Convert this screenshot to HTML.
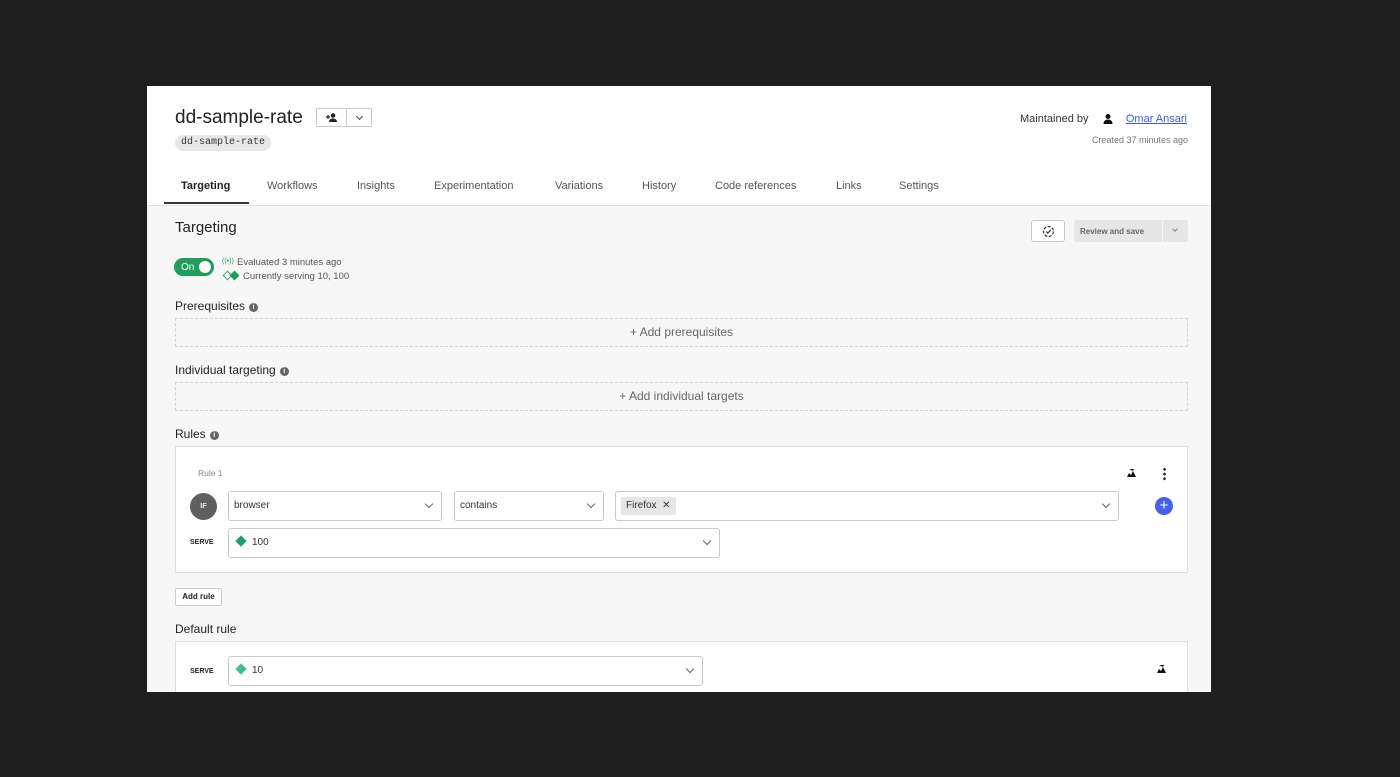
<!DOCTYPE html>
<html><head><style>
*{box-sizing:border-box;margin:0;padding:0}
body{width:1400px;height:777px;background:#1e1e1e;font-family:"Liberation Sans",sans-serif;position:relative;overflow:hidden;color:#222}
.a{position:absolute}
#panel{left:147px;top:86px;width:1064px;height:606px;background:#f7f7f7;overflow:hidden}
#head{left:0;top:0;width:1064px;height:120px;background:#fff;border-bottom:1px solid #e2e2e2}
.tab{position:absolute;top:94px;font-size:11px;color:#555}
.info{display:inline-block;width:9px;height:9px;border-radius:50%;background:#666;color:#fff;font-size:7px;text-align:center;line-height:9px;font-weight:bold;vertical-align:1px;margin-left:4px}
.sec{font-size:12px;color:#222}
.dash{border:1px dashed #d4d4d4;height:29px;left:28px;width:1013px;font-size:12px;color:#666;text-align:center;line-height:27px}
.box{background:#fff;border:1px solid #e0e0e0}
.sel{position:absolute;background:#fff;border:1px solid #c9c9c9;border-radius:3px;font-size:10px;color:#333;line-height:28px;padding-left:5px;height:30px}
.chev{position:absolute;right:9px;top:9px;width:6px;height:6px;border-right:1.3px solid #666;border-bottom:1.3px solid #666;transform:rotate(45deg)}
.dia{display:inline-block;width:8px;height:8px;background:#1f9e6c;transform:rotate(45deg);margin:0 7px 0 3px}
.serve{font-size:7px;font-weight:bold;color:#222}
</style></head><body>
<div id="panel" class="a">
 <div id="head" class="a">
  <div class="a" style="left:28px;top:21px;font-size:19px;color:#222">dd-sample-rate</div>
  <div class="a" style="left:169px;top:22px;width:56px;height:19px;border:1px solid #c8c8c8;border-radius:2px;background:#fff">
   <div class="a" style="left:29px;top:0;width:1px;height:17px;background:#ccc"></div>
   <svg class="a" style="left:8px;top:3px" width="13" height="11" viewBox="0 0 13 11"><circle cx="8" cy="3.5" r="2.3" fill="#222"/><path d="M4 10c0-2.5 2-3.5 4-3.5s4 1 4 3.5z" fill="#222"/><path d="M1 5h4M3 3v4" stroke="#222" stroke-width="1.2"/></svg>
   <div class="a" style="left:40px;top:5px;width:5px;height:5px;border-right:1.2px solid #444;border-bottom:1.2px solid #444;transform:rotate(45deg)"></div>
  </div>
  <div class="a" style="left:28px;top:49px;height:16px;padding:0 6px;background:#e8e8e8;border-radius:8px;font-family:'Liberation Mono',monospace;font-size:10px;line-height:16px;color:#333">dd-sample-rate</div>
  <div class="a" style="left:873px;top:27px;font-size:11px;color:#333">Maintained by</div>
  <svg class="a" style="left:955px;top:27px" width="12" height="12" viewBox="0 0 12 12"><circle cx="6" cy="3.5" r="2.5" fill="#111"/><path d="M1.5 11c0-3 2-4.5 4.5-4.5s4.5 1.5 4.5 4.5z" fill="#111"/></svg>
  <div class="a" style="left:973px;top:27px;width:67px;text-align:right;font-size:11px;color:#3d5ad8;text-decoration:underline">Omar Ansari</div>
  <div class="a" style="left:900px;top:49px;width:141px;text-align:right;font-size:9px;color:#777">Created 37 minutes ago</div>
  <div class="tab" style="left:34px;color:#222;font-weight:bold">Targeting</div>
  <div class="a" style="left:17px;top:116px;width:85px;height:2px;background:#333"></div>
  <div class="tab" style="left:120px">Workflows</div>
  <div class="tab" style="left:210px">Insights</div>
  <div class="tab" style="left:287px">Experimentation</div>
  <div class="tab" style="left:408px">Variations</div>
  <div class="tab" style="left:495px">History</div>
  <div class="tab" style="left:568px">Code references</div>
  <div class="tab" style="left:689px">Links</div>
  <div class="tab" style="left:752px">Settings</div>
 </div>
 <div class="a" style="left:28px;top:133px;font-size:15px;color:#222">Targeting</div>
 <div class="a" style="left:884px;top:134px;width:34px;height:22px;background:#fff;border:1px solid #c8c8c8;border-radius:3px">
  <svg class="a" style="left:10px;top:4px" width="13" height="13" viewBox="0 0 13 13"><circle cx="6.5" cy="6.5" r="5" fill="none" stroke="#333" stroke-width="1.2" stroke-dasharray="3 1.5"/><path d="M4.3 6.6l1.5 1.5 3-3" fill="none" stroke="#333" stroke-width="1.2"/></svg>
 </div>
 <div class="a" style="left:927px;top:134px;width:114px;height:22px;background:#e6e6e6;border-radius:3px">
  <div class="a" style="left:6px;top:7px;font-size:8px;font-weight:bold;color:#666">Review and save</div>
  <div class="a" style="left:88px;top:0;width:1px;height:22px;background:#f7f7f7"></div>
  <div class="a" style="left:99px;top:7px;width:4px;height:4px;border-right:1px solid #888;border-bottom:1px solid #888;transform:rotate(45deg)"></div>
 </div>
 <div class="a" style="left:27px;top:172px;width:40px;height:18px;background:#1f9e5b;border-radius:9px">
  <div class="a" style="left:7px;top:4px;font-size:10px;color:#fff">On</div>
  <div class="a" style="left:25px;top:3px;width:12px;height:12px;border-radius:50%;background:#fff"></div>
 </div>
 <div class="a" style="left:75px;top:172px;font-size:7px;color:#1f9e5b">((•))</div>
 <div class="a" style="left:90px;top:171px;font-size:9.5px;color:#555">Evaluated 3 minutes ago</div>
 <div class="a" style="left:77px;top:186px;width:7px;height:7px;border:1.5px solid #35b07a;transform:rotate(45deg)"></div>
 <div class="a" style="left:84px;top:186px;width:7px;height:7px;background:#1f9e5b;transform:rotate(45deg)"></div>
 <div class="a" style="left:96px;top:185px;font-size:9.5px;color:#555">Currently serving 10, 100</div>

 <div class="a sec" style="left:28px;top:213px">Prerequisites<span class="info">i</span></div>
 <div class="a dash" style="top:232px">+ Add prerequisites</div>
 <div class="a sec" style="left:28px;top:277px">Individual targeting<span class="info">i</span></div>
 <div class="a dash" style="top:296px">+ Add individual targets</div>
 <div class="a sec" style="left:28px;top:341px">Rules<span class="info">i</span></div>

 <div class="a box" style="left:28px;top:360px;width:1013px;height:127px">
  <div class="a" style="left:22px;top:21px;font-size:8.5px;color:#888">Rule 1</div>
  <svg class="a" style="left:950px;top:21px" width="11" height="10" viewBox="0 0 11 10"><path d="M1 9l2-4 2 2 2-4 3 6z M3 1h5l-1 2" fill="#111"/></svg>
  <div class="a" style="left:987px;top:20px;width:3px;height:14px;background:radial-gradient(circle,#222 1.2px,transparent 1.5px) 0 0/3px 4.7px"></div>
  <div class="a" style="left:14px;top:46px;width:27px;height:27px;border-radius:50%;background:#5f5f5f;color:#fff;font-size:7px;font-weight:bold;text-align:center;line-height:27px">IF</div>
  <div class="sel" style="left:52px;top:44px;width:214px">browser<div class="chev"></div></div>
  <div class="sel" style="left:278px;top:44px;width:150px">contains<div class="chev"></div></div>
  <div class="sel" style="left:439px;top:44px;width:504px;padding-top:5px;line-height:18px"><span style="display:inline-block;background:#e6e6e6;border-radius:2px;padding:0 5px;line-height:18px;font-size:10px">Firefox &nbsp;✕</span><div class="chev"></div></div>
  <div class="a" style="left:979px;top:50px;width:18px;height:18px;border-radius:50%;background:#4861ec;color:#fff;text-align:center;font-size:15px;line-height:17px">+</div>
  <div class="a serve" style="left:14px;top:92px">SERVE</div>
  <div class="sel" style="left:52px;top:81px;width:492px"><span class="dia"></span>100<div class="chev"></div></div>
 </div>
 <div class="a" style="left:28px;top:502px;width:47px;height:18px;background:#fff;border:1px solid #ccc;border-radius:2px;font-size:8px;font-weight:bold;text-align:center;line-height:16px">Add rule</div>
 <div class="a sec" style="left:28px;top:536px">Default rule</div>
 <div class="a box" style="left:28px;top:555px;width:1013px;height:60px">
  <div class="a serve" style="left:14px;top:26px">SERVE</div>
  <div class="sel" style="left:52px;top:14px;width:475px"><span class="dia" style="background:#3cbf8a"></span>10<div class="chev"></div></div>
  <svg class="a" style="left:980px;top:22px" width="11" height="10" viewBox="0 0 11 10"><path d="M1 9l2-4 2 2 2-4 3 6z M3 1h5l-1 2" fill="#111"/></svg>
 </div>
</div>
</body></html>
